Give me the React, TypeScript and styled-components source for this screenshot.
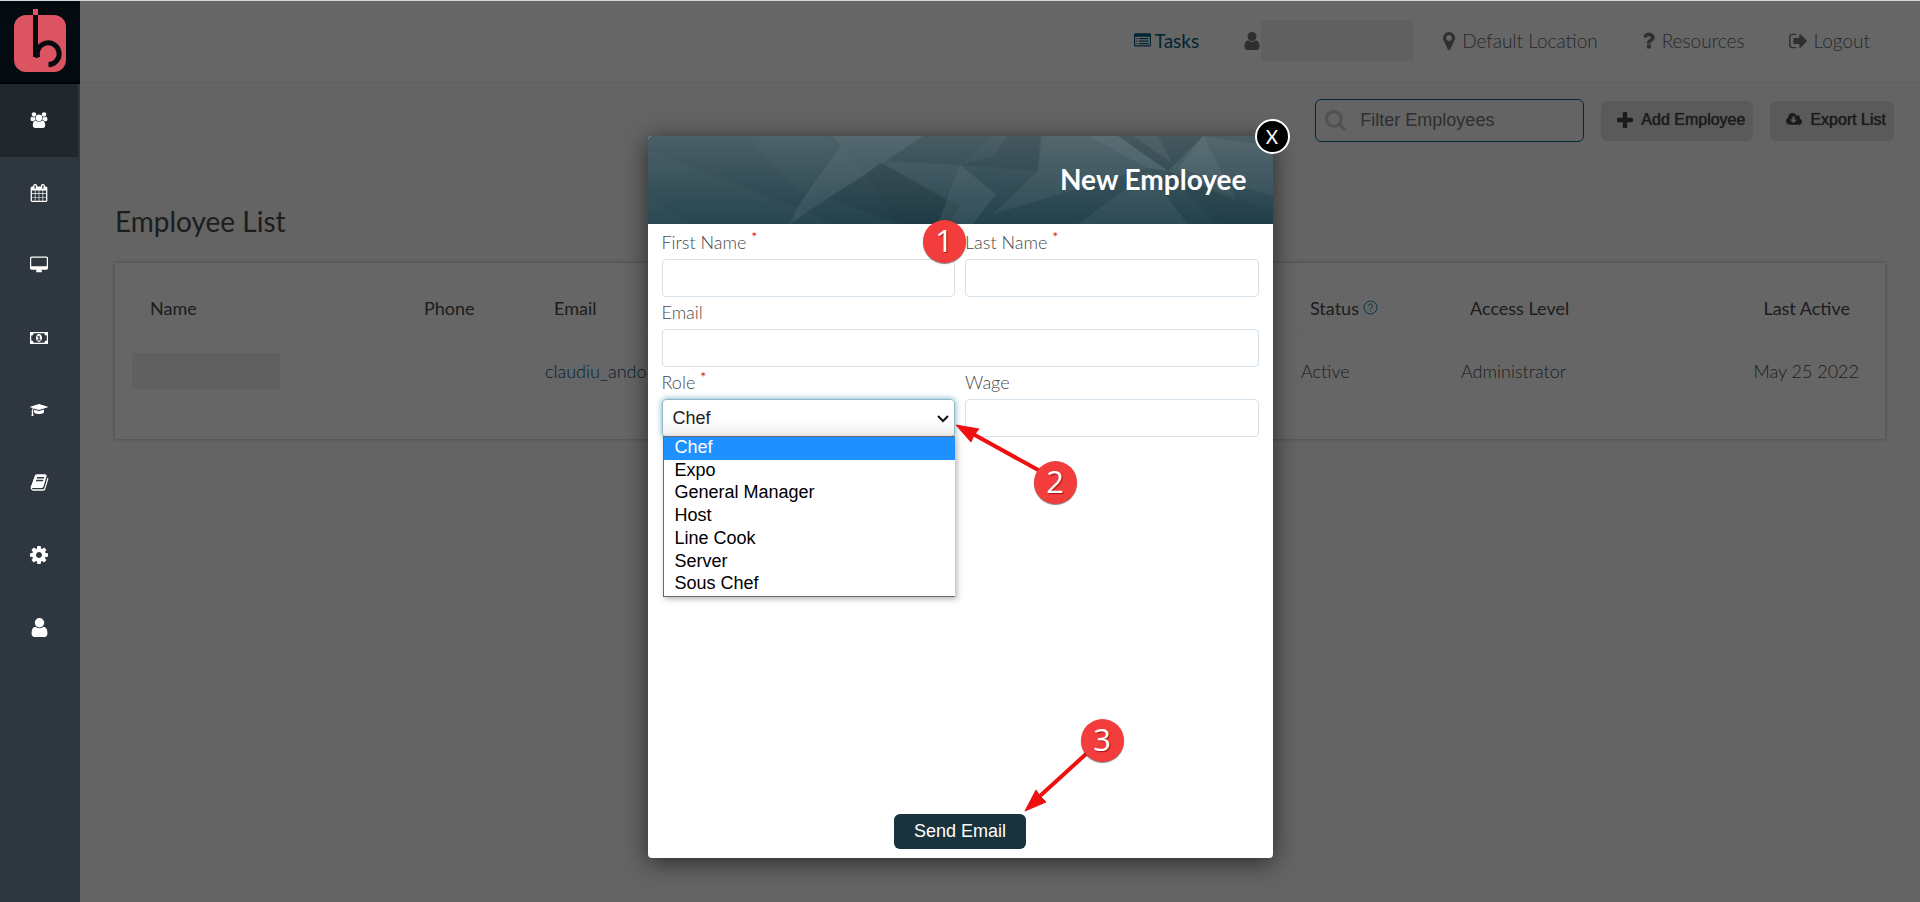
import React from "react";
import styled, { createGlobalStyle } from "styled-components";

const Global = createGlobalStyle`
  * { box-sizing: border-box; }
  html, body, #root { height: 100%; }
  body { margin: 0; background: #fafafa; font-family: Lato, "Open Sans", sans-serif; font-size: 18px; font-weight: 300; color: #4a4a4a; }
  button, input, select { font-family: "Liberation Sans", Arial, sans-serif; font-size: 18px; }
`;

type Glyph = { box: string; d: string };
const glyphs: Record<string, Glyph> = {
  users: { box: "0 0 2048 1792", d: "M657 896q-162 5-265 128h-134q-82 0-138-40.5t-56-118.5q0-353 124-353 6 0 43.5 21t97.5 42.5 119 21.5q67 0 133-23-5 37-5 66 0 139 81 256zm1071 637q0 120-73 189.5t-194 69.5h-874q-121 0-194-69.5t-73-189.5q0-53 3.5-103.5t14-109 26.5-108.5 43-97.5 62-81 85.5-53.5 111.5-20q10 0 43 21.5t73 48 107 48 135 21.5 135-21.5 107-48 73-48 43-21.5q61 0 111.5 20t85.5 53.5 62 81 43 97.5 26.5 108.5 14 109 3.5 103.5zm-1024-1277q0 106-75 181t-181 75-181-75-75-181 75-181 181-75 181 75 75 181zm704 384q0 159-112.5 271.5t-271.5 112.5-271.5-112.5-112.5-271.5 112.5-271.5 271.5-112.5 271.5 112.5 112.5 271.5zm576 225q0 78-56 118.5t-138 40.5h-134q-103-123-265-128 81-117 81-256 0-29-5-66 66 23 133 23 59 0 119-21.5t97.5-42.5 43.5-21q124 0 124 353zm-128-609q0 106-75 181t-181 75-181-75-75-181 75-181 181-75 181 75 75 181z" },
  calendar: { box: "0 0 1792 1792", d: "M192 1664h288v-288h-288v288zm352 0h320v-288h-320v288zm-352-352h288v-320h-288v320zm352 0h320v-320h-320v320zm-352-384h288v-288h-288v288zm736 736h320v-288h-320v288zm-384-736h320v-288h-320v288zm768 736h288v-288h-288v288zm-384-352h320v-320h-320v320zm-352-864v-288q0-13-9.5-22.5t-22.5-9.5h-64q-13 0-22.5 9.5t-9.5 22.5v288q0 13 9.5 22.5t22.5 9.5h64q13 0 22.5-9.5t9.5-22.5zm736 864h288v-320h-288v320zm-384-384h320v-288h-320v288zm384 0h288v-288h-288v288zm32-480v-288q0-13-9.5-22.5t-22.5-9.5h-64q-13 0-22.5 9.5t-9.5 22.5v288q0 13 9.5 22.5t22.5 9.5h64q13 0 22.5-9.5t9.5-22.5zm384-64v1280q0 52-38 90t-90 38h-1408q-52 0-90-38t-38-90v-1280q0-52 38-90t90-38h128v-96q0-66 47-113t113-47h64q66 0 113 47t47 113v96h384v-96q0-66 47-113t113-47h64q66 0 113 47t47 113v96h128q52 0 90 38t38 90z" },
  desktop: { box: "-64 0 1920 1792", d: "M1728 992v-832q0-13-9.5-22.5t-22.5-9.5h-1600q-13 0-22.5 9.5t-9.5 22.5v832q0 13 9.5 22.5t22.5 9.5h1600q13 0 22.5-9.5t9.5-22.5zm128-832v1088q0 66-47 113t-113 47h-544q0 37 16 77.5t32 71 16 43.5q0 26-19 45t-45 19h-512q-26 0-45-19t-19-45q0-14 16-44t32-70 16-78h-544q-66 0-113-47t-47-113v-1088q0-66 47-113t113-47h1600q66 0 113 47t47 113z" },
  money: { box: "0 -256 1920 1792", d: "M0 0h1920v1280h-1920zM384 128q0 106-75 181t-181 75v512q106 0 181 75t75 181h1152q0-106 75-181t181-75v-512q-106 0-181-75t-75-181zM960 224q140 0 230 122t90 294-90 294-230 122-230-122-90-294 90-294 230-122zM900 400q-30 80-132 112l66 100 62-34v222h-128v96h384v-96h-120v-400z" },
  cap: { box: "0 0 2304 1792", d: "M1774 836l18 316q4 69-82 128t-235 93.5-323 34.5-323-34.5-235-93.5-82-128l18-316 574 181q22 7 48 7t48-7zm530-324q0 23-22 31l-1120 352q-4 1-10 1t-10-1l-652-206q-43 34-71 111.5t-34 178.5q63 36 63 109 0 69-58 107l58 433q2 14-8 25-9 11-24 11h-192q-15 0-24-11-10-11-8-25l58-433q-58-38-58-107 0-73 65-111 11-207 98-330l-333-104q-22-8-22-31t22-31l1120-352q4-1 10-1t10 1l1120 352q22 8 22 31z" },
  book: { box: "0 0 1792 1792", d: "M1703 478q40 57 18 129l-275 906q-19 64-76.5 107.5t-122.5 43.5h-923q-77 0-148.5-53.5t-99.5-131.5q-24-67-2-127 0-4 3-27t4-37q1-8-3-21.5t-3-19.5q2-11 8-21t16.5-23.5 16.5-23.5q23-38 45-91.5t30-91.5q3-10 .5-30t-.5-28q3-11 17-28t17-23q21-36 42-92t25-90q1-9-2.5-32t.5-28q4-13 22-30.5t22-22.5q19-26 42.5-84.5t27.5-96.5q1-8-3-25.5t-2-26.5q2-8 9-18t18-23 17-21q8-12 16.5-30.5t15-35 16-36 19.5-32 26.5-23.5 36-11.5 47.5 5.5l-1 3q38-9 51-9h761q74 0 114 56t18 130l-274 906q-36 119-71.5 153.5t-128.5 34.5h-869q-27 0-38 15-11 16-1 43 24 70 144 70h923q29 0 56-15.5t35-41.5l300-987q7-22 5-57 38 15 59 43zm-1064 2q-4 13 2 22.5t20 9.5h608q13 0 25.5-9.5t16.5-22.5l21-64q4-13-2-22.5t-20-9.5h-608q-13 0-25.5 9.5t-16.5 22.5zm-83 256q-4 13 2 22.5t20 9.5h608q13 0 25.5-9.5t16.5-22.5l21-64q4-13-2-22.5t-20-9.5h-608q-13 0-25.5 9.5t-16.5 22.5z" },
  cog: { box: "128 128 1536 1536", d: "M1152 896q0-106-75-181t-181-75-181 75-75 181 75 181 181 75 181-75 75-181zm512-109v222q0 12-8 23t-20 13l-185 28q-19 54-39 91 35 50 107 138 10 12 10 25t-9 23q-27 37-99 108t-94 71q-12 0-26-9l-138-108q-44 23-91 38-16 136-29 186-7 28-36 28h-222q-14 0-24.5-8.5t-11.5-21.5l-28-184q-49-16-90-37l-141 107q-10 9-25 9-14 0-25-11-126-114-165-168-7-10-7-23 0-12 8-23 15-21 51-66.5t54-70.5q-27-50-41-99l-183-27q-13-2-21-12.5t-8-23.5v-222q0-12 8-23t19-13l186-28q14-46 39-92-40-57-107-138-10-12-10-24 0-10 9-23 26-36 98.5-107.5t94.5-71.5q13 0 26 10l138 107q44-23 91-38 16-136 29-186 7-28 36-28h222q14 0 24.5 8.5t11.5 21.5l28 184q49 16 90 37l142-107q9-9 24-9 13 0 25 10 129 119 165 170 7 8 7 22 0 12-8 23-15 21-51 66.5t-54 70.5q26 50 41 98l183 28q13 2 21 12.5t8 23.5z" },
  user: { box: "128 128 1536 1536", d: "M1536 1399q0 109-62.5 187t-150.5 78h-854q-88 0-150.5-78t-62.5-187q0-85 8.5-160.5t31.5-152 58.5-131 94-89 134.5-34.5q131 128 313 128t313-128q76 0 134.5 34.5t94 89 58.5 131 31.5 152 8.5 160.5zm-256-887q0 159-112.5 271.5t-271.5 112.5-271.5-112.5-112.5-271.5 112.5-271.5 271.5-112.5 271.5 112.5 112.5 271.5z" },
  tasks: { box: "0 0 1792 1536", d: "M0 128q0-128 128-128h1536q128 0 128 128v1152q0 128-128 128h-1536q-128 0-128-128zM128 384v864q0 32 32 32h1472q32 0 32-32v-864zM256 512h128v128h-128zM512 512h1024v128h-1024zM256 768h128v128h-128zM512 768h1024v128h-1024zM256 1024h128v128h-128zM512 1024h1024v128h-1024z" },
  marker: { box: "384 128 1024 1536", d: "M1152 640q0-106-75-181t-181-75-181 75-75 181 75 181 181 75 181-75 75-181zm256 0q0 109-33 179l-364 774q-16 33-47.5 52t-67.5 19-67.5-19-46.5-52l-365-774q-33-70-33-179 0-212 150-362t362-150 362 150 150 362z" },
  question: { box: "384 128 1024 1536", d: "M1088 1256v240q0 16-12 28t-28 12h-240q-16 0-28-12t-12-28v-240q0-16 12-28t28-12h240q16 0 28 12t12 28zm316-600q0 54-15.5 101t-35 76.5-55 59.5-57.5 43.5-61 35.5q-41 23-68.5 65t-27.5 67q0 17-12 32.5t-28 15.5h-240q-15 0-25.5-18.5t-10.5-37.5v-45q0-83 65-156.5t143-108.5q59-27 84-56t25-76q0-42-46.5-74t-107.5-32q-65 0-108 29-35 25-107 115-13 16-31 16-12 0-25-8l-164-125q-13-10-15.5-25t5.5-28q160-266 464-266 80 0 161 31t146 83 106 127.5 41 158.5z" },
  signout: { box: "64 128 1568 1536", d: "M704 1440q0 4 1 20t.5 26.5-3 23.5-10 19.5-20.5 6.5h-320q-119 0-203.5-84.5t-84.5-203.5v-704q0-119 84.5-203.5t203.5-84.5h320q13 0 22.5 9.5t9.5 22.5q0 4 1 20t.5 26.5-3 23.5-10 19.5-20.5 6.5h-320q-66 0-113 47t-47 113v704q0 66 47 113t113 47h312l11.5 1 11.5 3 8 5.5 7 9 2 13.5zm928-544q0 26-19 45l-544 544q-19 19-45 19t-45-19-19-45v-288h-448q-26 0-45-19t-19-45v-384q0-26 19-45t45-19h448v-288q0-26 19-45t45-19 45 19l544 544q19 19 19 45z" },
  search: { box: "64 128 1664 1664", d: "M1216 832q0-185-131.5-316.5t-316.5-131.5-316.5 131.5-131.5 316.5 131.5 316.5 316.5 131.5 316.5-131.5 131.5-316.5zm512 832q0 52-38 90t-90 38q-54 0-90-38l-343-342q-179 124-399 124-143 0-273.5-55.5t-225-150-150-225-55.5-273.5 55.5-273.5 150-225 225-150 273.5-55.5 273.5 55.5 225 150 150 225 55.5 273.5q0 220-124 399l343 343q37 37 37 90z" },
  plus: { box: "192 128 1408 1408", d: "M1600 736v192q0 40-28 68t-68 28h-416v416q0 40-28 68t-68 28h-192q-40 0-68-28t-28-68v-416h-416q-40 0-68-28t-28-68v-192q0-40 28-68t68-28h416v-416q0-40 28-68t68-28h192q40 0 68 28t28 68v416h416q40 0 68 28t28 68z" },
  cloud: { box: "0 128 1920 1536", d: "M1280 928q0-14-9-23t-23-9h-224v-352q0-13-9.5-22.5t-22.5-9.5h-192q-13 0-22.5 9.5t-9.5 22.5v352h-224q-13 0-22.5 9.5t-9.5 22.5q0 14 9 23l352 352q9 9 23 9t23-9l351-351q10-12 10-24zm640 224q0 159-112.5 271.5t-271.5 112.5h-1088q-185 0-316.5-131.5t-131.5-316.5q0-130 70-240t188-165q-2-30-2-43 0-212 150-362t362-150q156 0 285.5 87t188.5 231q71-62 166-62 106 0 181 75t75 181q0 76-41 138 130 31 213.5 135.5t83.5 238.5z" },
};

function Icon({ name, w = 18, h = 18 }: { name: string; w?: number; h?: number }) {
  const g = glyphs[name];
  return (
    <svg width={w} height={h} viewBox={g.box} fill="currentColor" fillRule="evenodd" aria-hidden="true">
      <path d={g.d} />
    </svg>
  );
}

const Shell = styled.div`
  display: flex;
  min-height: 100vh;
  border-top: 1px solid #d3dbda;
`;
const Sidebar = styled.aside`
  position: relative;
  z-index: 20;
  flex: 0 0 80px;
  background: #2e363f;
`;
const Logo = styled.a`
  display: flex;
  justify-content: center;
  height: 83px;
  padding-top: 8px;
  background: #040b10;
  border-bottom: 2px solid #000;
`;
const SideNav = styled.nav`
  display: grid;
  grid-auto-rows: 1fr;
  height: 580px;
`;
const SideLink = styled.a<{ $active?: boolean }>`
  display: flex;
  align-items: center;
  justify-content: center;
  margin-right: 2px;
  color: #fff;
  background: ${(p) => (p.$active ? "#20272d" : "transparent")};
`;
const Main = styled.main`
  flex: 1;
  min-width: 0;
`;
const TopBar = styled.header`
  display: flex;
  align-items: center;
  justify-content: flex-end;
  gap: 44px;
  height: 82px;
  padding: 0 50px 2px 0;
  background: #fff;
  border-bottom: 1px solid #f1f1f1;
`;
const TopLink = styled.a<{ $accent?: boolean }>`
  display: flex;
  align-items: center;
  gap: ${(p) => (p.$accent ? 4 : 7)}px;
  color: ${(p) => (p.$accent ? "#005f86" : "#666")};
  font-size: 19px;
  font-weight: ${(p) => (p.$accent ? 400 : 300)};
  text-decoration: none;
  svg { color: ${(p) => (p.$accent ? "#005f86" : "#777")}; }
`;
const Account = styled.a`
  display: flex;
  align-items: center;
  margin-right: -14px;
  color: #777;
`;
const Redacted = styled.span<{ $w: number; $h: number }>`
  display: block;
  width: ${(p) => p.$w}px;
  height: ${(p) => p.$h}px;
  background: #f1f1f1;
`;
const Toolbar = styled.div`
  display: flex;
  justify-content: flex-end;
  align-items: center;
  gap: 17px;
  padding: 16px 26px 0;
`;
const SearchBox = styled.label`
  display: flex;
  align-items: center;
  gap: 14px;
  width: 269px;
  height: 43px;
  padding: 0 9px;
  color: #ccc;
  border: 1px solid #00698c;
  border-radius: 6px;
`;
const SearchInput = styled.input`
  flex: 1;
  min-width: 0;
  padding: 0;
  border: 0;
  outline: 0;
  background: transparent;
  &::placeholder { color: #757575; opacity: 1; }
`;
const ToolButton = styled.button`
  display: flex;
  align-items: center;
  gap: 8px;
  height: 40px;
  padding: 0 8px 2px 16px;
  border: 0;
  border-radius: 6px;
  background: #e0e0e0;
  color: #444;
  font-size: 16px;
  text-shadow: 0 0 1px #444;
`;
const Title = styled.h1`
  margin: 62px 35px 25px;
  font-size: 28px;
  line-height: 34px;
  font-weight: 400;
`;
const Card = styled.section`
  margin: 0 35px;
  padding: 20px 17px 50px;
  background: #fff;
  box-shadow: 0 0 4px rgba(0, 0, 0, 0.3);
`;
const Table = styled.table`
  width: 100%;
  table-layout: fixed;
  border-collapse: collapse;
`;
const Th = styled.th<{ $w?: number; $right?: boolean }>`
  width: ${(p) => (p.$w ? p.$w + "px" : "auto")};
  height: 50px;
  padding: 0 18px;
  font-weight: 400;
  white-space: nowrap;
  text-align: ${(p) => (p.$right ? "right" : "left")};
  border-bottom: 1px solid #f6fafa;
`;
const Td = styled.td<{ $flush?: boolean; $right?: boolean }>`
  height: 55px;
  padding: ${(p) => (p.$flush ? "19px 0 0" : "19px 9px 0")};
  white-space: nowrap;
  text-align: ${(p) => (p.$right ? "right" : "left")};
`;
const MailLink = styled.a`
  color: #005478;
  text-decoration: none;
`;
const Help = styled.svg`
  margin-left: 4px;
`;

const Overlay = styled.div`
  position: absolute;
  inset: 1px 0 0;
  z-index: 10;
  display: flex;
  justify-content: center;
  align-items: flex-start;
  padding-top: 135px;
  background: rgba(0, 0, 0, 0.6);
`;
const Modal = styled.section`
  position: relative;
  display: flex;
  flex-direction: column;
  width: 625px;
  min-height: 722px;
  background: #fff;
  border-radius: 4px;
  box-shadow: 0 4px 24px rgba(0, 0, 0, 0.6);
`;
const ModalHead = styled.header`
  position: relative;
  height: 88px;
  overflow: hidden;
  border-radius: 4px 4px 0 0;
  background: linear-gradient(#4b5f66, #22414c);
`;
const Facets = styled.svg`
  display: block;
  width: 100%;
  height: 100%;
`;
const ModalTitle = styled.h2`
  position: absolute;
  inset: 0 26px 0 auto;
  margin: 0;
  color: #fff;
  font-size: 28px;
  line-height: 86px;
  font-weight: 700;
`;
const Close = styled.button`
  position: absolute;
  top: -17px;
  right: -17px;
  z-index: 2;
  width: 35px;
  height: 35px;
  padding: 0;
  border: 2px solid #fff;
  border-radius: 50%;
  background: #000;
  color: #fff;
  font-family: Lato, sans-serif;
  font-size: 19px;
  line-height: 30px;
`;
const Form = styled.form`
  display: grid;
  grid-template-columns: 1fr 1fr;
  grid-template-rows: auto auto auto 1fr;
  column-gap: 10px;
  flex: 1;
  padding: 3px 14px 9px;
`;
const Field = styled.div<{ $wide?: boolean }>`
  position: relative;
  grid-column: ${(p) => (p.$wide ? "1 / -1" : "auto")};
`;
const Label = styled.label`
  display: block;
  height: 32px;
  line-height: 30px;
`;
const Star = styled.sup`
  color: #e02020;
  font-size: 14px;
  font-weight: 400;
  line-height: 12px;
`;
const Input = styled.input`
  display: block;
  width: 100%;
  height: 38px;
  padding: 0 10px;
  border: 1px solid #d5e1ea;
  border-radius: 4px;
  background: #fff;
`;
const SelectWrap = styled.div`
  position: relative;
`;
const Select = styled.select`
  display: block;
  width: 100%;
  height: 38px;
  padding: 0 10px;
  appearance: none;
  border: 1px solid #8fbccb;
  border-radius: 4px;
  background: linear-gradient(#fff 50%, #f0f0f0);
  box-shadow: 0 0 6px #6faabd;
  color: #222;
`;
const Chevron = styled.svg`
  position: absolute;
  top: 16px;
  right: 6px;
  pointer-events: none;
`;
const Options = styled.ul`
  position: absolute;
  z-index: 3;
  top: 69px;
  left: 1px;
  right: 0;
  display: grid;
  grid-auto-rows: 1fr;
  height: 161px;
  margin: 0;
  padding: 0;
  list-style: none;
  background: #fff;
  border: 1px solid #6b6b6b;
  border-right: 0;
  box-shadow: 2px 2px 6px rgba(0, 0, 0, 0.3);
  font-family: "Liberation Sans", Arial, sans-serif;
  font-weight: 400;
`;
const Option = styled.li<{ $on?: boolean }>`
  padding-left: 11px;
  line-height: 20px;
  color: ${(p) => (p.$on ? "#fff" : "#000")};
  background: ${(p) => (p.$on ? "#1e90ff" : "#fff")};
`;
const Send = styled.button`
  grid-column: 1 / -1;
  align-self: end;
  justify-self: center;
  height: 35px;
  padding: 0 20px;
  border: 0;
  border-radius: 6px;
  background: #19323b;
  color: #fff;
`;
const Marks = styled.div`
  position: absolute;
  inset: 0;
  z-index: 5;
  pointer-events: none;
`;
const Arrows = styled.svg`
  position: absolute;
  inset: 0;
`;
const Badge = styled.span<{ $x: number; $y: number }>`
  position: absolute;
  left: ${(p) => p.$x}px;
  top: ${(p) => p.$y}px;
  width: 43px;
  height: 43px;
  border-radius: 50%;
  background: #f33c3c;
  box-shadow: 0 1px 1px rgba(0, 0, 0, 0.5);
  color: #fff;
  font-family: "Open Sans", sans-serif;
  font-size: 31px;
  font-weight: 500;
  line-height: 41px;
  text-align: center;
  text-shadow: 1px 1px 1px rgba(90, 0, 0, 0.6);
`;

const sideItems: [string, string, number, number][] = [
  ["Employees", "users", 18, 18],
  ["Schedule", "calendar", 18, 18],
  ["Stations", "desktop", 18, 18],
  ["Payroll", "money", 18, 18],
  ["Training", "cap", 18, 14],
  ["Manuals", "book", 19, 19],
  ["Settings", "cog", 18, 18],
  ["Profile", "user", 19, 19],
];
const roles = ["Chef", "Expo", "General Manager", "Host", "Line Cook", "Server", "Sous Chef"];

const facets: [string, string, number][] = [
  ["0,14 160,76 185,88 45,88 0,62", "#fff", 0.025],
  ["0,62 45,88 0,88", "#fff", 0.04],
  ["100,0 180,0 193,10 160,62 125,30", "#fff", 0.02],
  ["193,10 218,38 180,62 142,88 150,70", "#fff", 0.07],
  ["183,0 275,0 218,38 193,10", "#fff", 0.06],
  ["218,38 232,26 312,70 300,88 250,88", "#000", 0.09],
  ["180,62 218,38 250,88", "#000", 0.06],
  ["275,0 345,0 312,29 240,24", "#000", 0.03],
  ["312,29 348,58 325,88 290,88", "#fff", 0.07],
  ["232,26 312,29 300,66", "#fff", 0.03],
  ["360,0 392,0 390,35 312,29 345,20", "#000", 0.07],
  ["394,0 440,0 500,32 345,78 390,35", "#fff", 0.05],
  ["440,0 470,0 520,35 500,32", "#fff", 0.09],
  ["470,0 555,0 520,35", "#000", 0.07],
  ["485,0 510,0 525,28", "#fff", 0.06],
  ["555,0 625,10 625,60 530,32", "#fff", 0.05],
  ["555,0 590,66 520,35", "#fff", 0.05],
  ["500,36 540,88 430,88", "#fff", 0.05],
  ["520,35 625,75 625,88 570,88", "#000", 0.05],
];

export default function App() {
  return (
    <>
      <Global />
      <Shell>
        <Sidebar>
          <Logo href="#" aria-label="Home">
            <svg width="52" height="64" viewBox="0 0 52 64" aria-hidden="true">
              <rect x="0" y="6" width="52" height="57" rx="12" fill="#dc5462" />
              <rect x="19" y="0" width="5" height="6" fill="#dc5462" />
              <path d="M21.500 6V48M23.800 48.500A11 11 0 1 1 34.500 55.800" fill="none" stroke="#040b10" strokeWidth="5" />
            </svg>
          </Logo>
          <SideNav>
            {sideItems.map(([label, icon, w, h], i) => (
              <SideLink key={label} href="#" aria-label={label} $active={i === 0}>
                <Icon name={icon} w={w} h={h} />
              </SideLink>
            ))}
          </SideNav>
        </Sidebar>
        <Main>
          <TopBar>
            <TopLink href="#" $accent><Icon name="tasks" w={17} h={15} />Tasks</TopLink>
            <Account href="#" aria-label="Account"><Icon name="user" /><Redacted $w={152} $h={41} /></Account>
            <TopLink href="#"><Icon name="marker" w={12} />Default Location</TopLink>
            <TopLink href="#"><Icon name="question" w={13} h={19} />Resources</TopLink>
            <TopLink href="#"><Icon name="signout" />Logout</TopLink>
          </TopBar>
          <Toolbar>
            <SearchBox>
              <Icon name="search" w={21} h={21} />
              <SearchInput placeholder="Filter Employees" aria-label="Filter Employees" />
            </SearchBox>
            <ToolButton><Icon name="plus" w={16} h={16} />Add Employee</ToolButton>
            <ToolButton><Icon name="cloud" w={16} h={13} />Export List</ToolButton>
          </Toolbar>
          <Title>Employee List</Title>
          <Card>
            <Table>
              <thead>
                <tr>
                  <Th $w={274}>Name</Th>
                  <Th $w={130}>Phone</Th>
                  <Th>Email</Th>
                  <Th $w={160}>
                    Status
                    <Help width="15" height="15" viewBox="0 0 15 15" fill="none" stroke="#2a86a8" aria-hidden="true">
                      <circle cx="7.5" cy="7.5" r="6.5" />
                      <path d="M5.500 6a2 2 0 1 1 2.800 1.800q-.8.400-.8 1.400M7.500 10.300v1.200" />
                    </Help>
                  </Th>
                  <Th $w={280}>Access Level</Th>
                  <Th $w={136} $right>Last Active</Th>
                </tr>
              </thead>
              <tbody>
                <tr>
                  <Td $flush><Redacted $w={148} $h={36} /></Td>
                  <Td />
                  <Td><MailLink href="#">claudiu_ando</MailLink></Td>
                  <Td>Active</Td>
                  <Td>Administrator</Td>
                  <Td $right>May 25 2022</Td>
                </tr>
              </tbody>
            </Table>
          </Card>
        </Main>
      </Shell>
      <Overlay>
        <Modal role="dialog" aria-labelledby="dialog-title">
          <ModalHead>
            <Facets viewBox="0 0 625 88" preserveAspectRatio="none" aria-hidden="true">
              {facets.map(([points, fill, opacity]) => (
                <polygon key={points} points={points} fill={fill} opacity={opacity} />
              ))}
            </Facets>
            <ModalTitle id="dialog-title">New Employee</ModalTitle>
          </ModalHead>
          <Close aria-label="Close">X</Close>
          <Form>
            <Field>
              <Label htmlFor="first">First Name <Star>*</Star></Label>
              <Input id="first" />
            </Field>
            <Field>
              <Label htmlFor="last">Last Name <Star>*</Star></Label>
              <Input id="last" />
            </Field>
            <Field $wide>
              <Label htmlFor="email">Email</Label>
              <Input id="email" type="email" />
            </Field>
            <Field>
              <Label htmlFor="role">Role <Star>*</Star></Label>
              <SelectWrap>
                <Select id="role" defaultValue="Chef">
                  {roles.map((r) => <option key={r}>{r}</option>)}
                </Select>
                <Chevron width="12" height="8" viewBox="0 0 12 8" fill="none" stroke="#111" strokeWidth="2" aria-hidden="true">
                  <path d="M1 1l5 5 5-5" />
                </Chevron>
              </SelectWrap>
              <Options role="listbox" aria-label="Role">
                {roles.map((r, i) => (
                  <Option key={r} role="option" aria-selected={i === 0} $on={i === 0}>{r}</Option>
                ))}
              </Options>
            </Field>
            <Field>
              <Label htmlFor="wage">Wage</Label>
              <Input id="wage" />
            </Field>
            <Send type="button">Send Email</Send>
          </Form>
          <Marks>
            <Arrows width="625" height="722" viewBox="0 0 625 722" fill="#ee1010" stroke="#ee1010" aria-hidden="true">
              <path d="M392 335L325 298M438 618L392 660" strokeWidth="4" />
              <path d="M308 289L331 293 326 299 323 306zM377 675L388 654 392 660 398 666z" strokeWidth="1" />
            </Arrows>
            <Badge $x={275} $y={84}>1</Badge>
            <Badge $x={386} $y={325}>2</Badge>
            <Badge $x={433} $y={583}>3</Badge>
          </Marks>
        </Modal>
      </Overlay>
    </>
  );
}
